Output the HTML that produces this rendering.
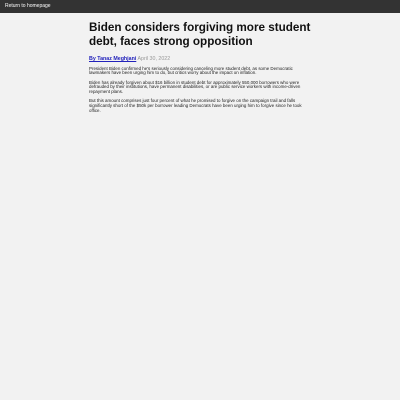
<!DOCTYPE html>
<html><head><style>
html,body{margin:0;padding:0;background:#f2f2f2;width:400px;height:400px;overflow:hidden;font-family:"Liberation Sans",Arial,sans-serif;}
.bar{height:13px;background:#333;color:#fff;font-size:5px;line-height:13px;padding-left:5px;}
.main{position:absolute;left:89px;top:21px;width:226px;}
h1{margin:0;font-size:11.7px;line-height:14px;font-weight:bold;color:#111;white-space:nowrap;}
.by{margin-top:7px;font-size:5.3px;line-height:6px;}
.by a{color:#2222bb;font-weight:bold;text-decoration:underline;}
.by span{color:#999;}
p{margin:4.5px 0 0;font-size:4.45px;line-height:4.8px;color:#222;white-space:nowrap;}
</style></head><body>
<div class="bar">Return to homepage</div>
<div class="main">
<h1>Biden considers forgiving more student<br>debt, faces strong opposition</h1>
<div class="by"><a>By Tanaz Meghjani</a> <span>April 30, 2022</span></div>
<p>President Biden confirmed he's seriously considering canceling more student debt, as some Democratic<br>lawmakers have been urging him to do, but critics worry about the impact on inflation.</p>
<p>Biden has already forgiven about $16 billion in student debt for approximately 550,000 borrowers who were<br>defrauded by their institutions, have permanent disabilities, or are public service workers with income-driven<br>repayment plans.</p>
<p>But this amount comprises just four percent of what he promised to forgive on the campaign trail and falls<br>significantly short of the $50k per borrower leading Democrats have been urging him to forgive since he took<br>office.</p>
</div>
</body></html>
